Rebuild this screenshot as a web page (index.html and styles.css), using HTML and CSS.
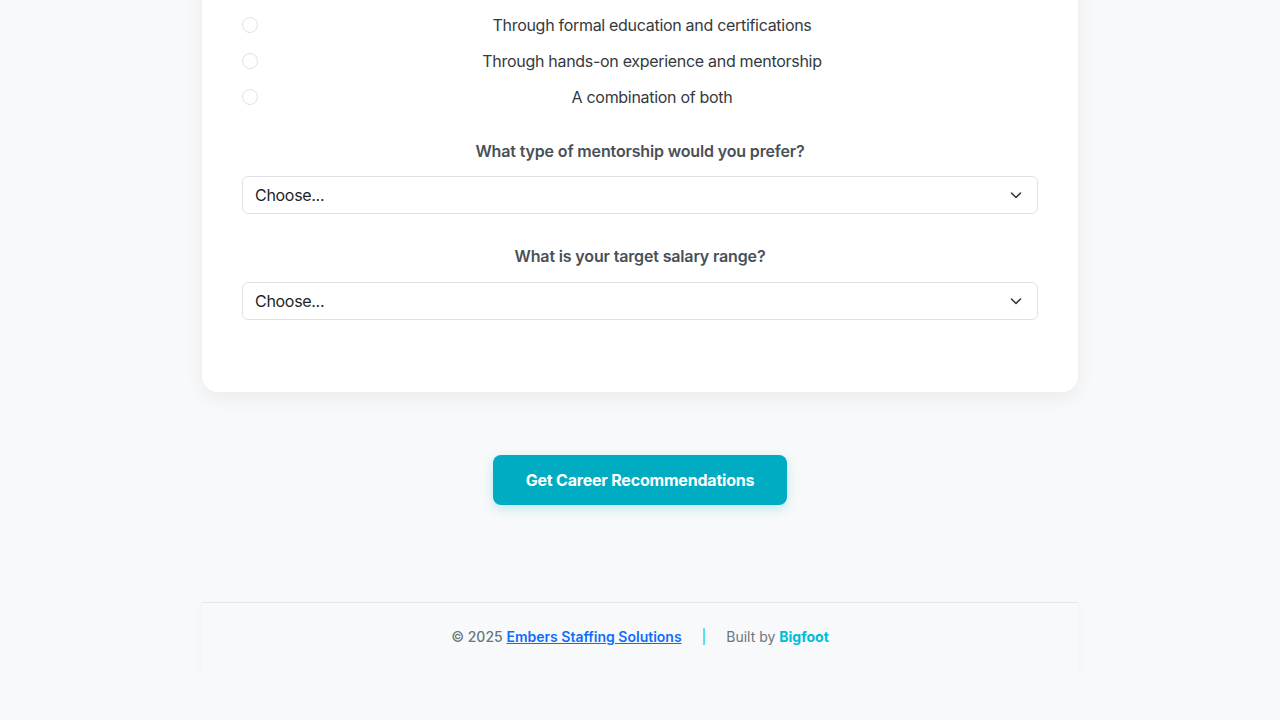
FILE: index.html
```html
<!DOCTYPE html>
<html lang="en">
<head>
<meta charset="utf-8">
<title>Career Survey</title>
<link rel="stylesheet" href="styles.css">
</head>
<body>
<main class="page">
  <section class="card">
    <div class="radio-group">
      <label class="radio-row"><span class="radio"></span><span class="radio-text">Through formal education and certifications</span></label>
      <label class="radio-row"><span class="radio"></span><span class="radio-text">Through hands-on experience and mentorship</span></label>
      <label class="radio-row"><span class="radio"></span><span class="radio-text">A combination of both</span></label>
    </div>
    <div class="field">
      <div class="field-label">What type of mentorship would you prefer?</div>
      <div class="select"><span>Choose...</span>
        <svg class="chev" width="16" height="16" viewBox="0 0 16 16"><path d="M3.5 6l4.5 4.5L12.5 6" fill="none" stroke="#343a40" stroke-width="1.6" stroke-linecap="round" stroke-linejoin="round"/></svg>
      </div>
    </div>
    <div class="field">
      <div class="field-label">What is your target salary range?</div>
      <div class="select"><span>Choose...</span>
        <svg class="chev" width="16" height="16" viewBox="0 0 16 16"><path d="M3.5 6l4.5 4.5L12.5 6" fill="none" stroke="#343a40" stroke-width="1.6" stroke-linecap="round" stroke-linejoin="round"/></svg>
      </div>
    </div>
  </section>
  <div class="actions">
    <button class="btn">Get Career Recommendations</button>
  </div>
  <footer class="footer">
    <span class="copy">© 2025 <a href="#" class="brand">Embers Staffing Solutions</a></span>
    <span class="sep">|</span>
    <span class="built">Built by <span class="bigfoot">Bigfoot</span></span>
  </footer>
</main>
</body>
</html>
```
FILE: styles.css
```css
* { box-sizing: border-box; }
html, body { margin: 0; padding: 0; }
body {
  background: #f8f9fa;
  font-family: Inter, "Noto Sans", sans-serif;
  color: #212529;
  font-size: 16px;
  letter-spacing: -0.3px;
}
.page {
  width: 876px;
  margin: 0 auto;
}
.card {
  margin-top: -27px;
  background: #fff;
  border-radius: 16px;
  padding: 40px 40px 42px;
  box-shadow: 0 6px 20px rgba(0,0,0,0.06);
}
.radio-group {
  display: flex;
  flex-direction: column;
  gap: 12px;
  margin-bottom: 30px;
}
.radio-row {
  display: flex;
  align-items: center;
  gap: 8px;
  height: 24px;
}
.radio {
  width: 16px;
  height: 16px;
  border-radius: 50%;
  border: 1px solid #dee2e6;
  background: #fff;
  flex: none;
}
.radio-text {
  flex: 1;
  text-align: center;
  color: #343a40;
  line-height: 24px;
}
.field { margin-bottom: 30px; }
.field-label {
  text-align: center;
  font-weight: 600;
  color: #495057;
  line-height: 24px;
  margin-bottom: 13px;
  letter-spacing: -0.15px;
}
.field + .field .field-label { margin-bottom: 14px; }
.select {
  height: 38px;
  border: 1px solid #dee2e6;
  border-radius: 6px;
  display: flex;
  align-items: center;
  justify-content: space-between;
  padding: 0 13px 0 12px;
  color: #212529;
  background: #fff;
}
.chev { flex: none; }
.actions {
  display: flex;
  justify-content: center;
  padding-top: 63px;
  padding-bottom: 97px;
}
.btn {
  width: 294px;
  height: 50px;
  border: none;
  border-radius: 8px;
  background: #00acc1;
  color: #fff;
  font-family: Inter, "Noto Sans", sans-serif;
  font-size: 16px;
  font-weight: 700;
  letter-spacing: -0.2px;
  box-shadow: 0 4px 12px rgba(0,172,193,0.22);
}
.footer {
  height: 70px;
  border-top: 1px solid #e5e7ea;
  background: #f8f9fa;
  display: flex;
  align-items: center;
  justify-content: center;
  font-size: 14px;
  line-height: 20px;
  padding-bottom: 2px;
  color: #6c757d;
  letter-spacing: 0;
  box-shadow: 0 4px 12px rgba(0,0,0,0.04);
}
.copy { font-weight: 500; }
.brand {
  color: #0d6efd;
  font-weight: 600;
  text-decoration: underline;
}
.sep {
  color: #00bcd4;
  margin: 0 20px;
  font-weight: 400;
}
.bigfoot {
  color: #00bcd4;
  font-weight: 700;
}
```
